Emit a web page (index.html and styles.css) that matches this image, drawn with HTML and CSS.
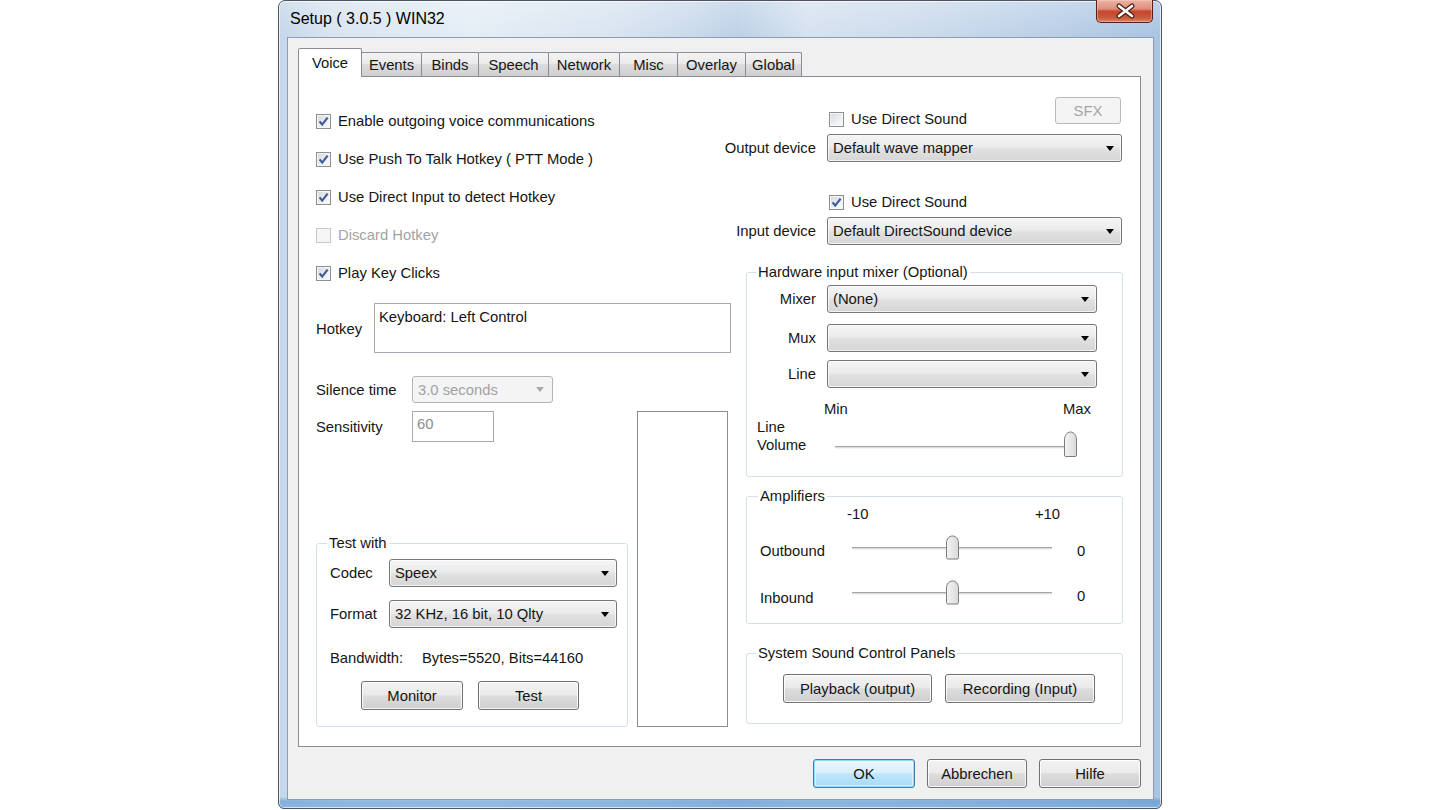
FILE: index.html
```html
<!DOCTYPE html>
<html>
<head>
<meta charset="utf-8">
<title>Setup ( 3.0.5 ) WIN32</title>
<link rel="stylesheet" href="styles.css">
</head>
<body>
<div class="window">
  <div class="titlebar">
    <span class="title">Setup ( 3.0.5 ) WIN32</span>
    <div class="close">
      <svg width="57" height="22" viewBox="0 0 57 22">
        <path d="M22 6 L35 16 M35 6 L22 16" stroke="#4b1d14" stroke-width="5" stroke-linecap="round" fill="none"/>
        <path d="M22 6 L35 16 M35 6 L22 16" stroke="#ffffff" stroke-width="2.6" stroke-linecap="round" fill="none"/>
      </svg>
    </div>
  </div>
  <div class="client">
    <div class="tabctl">
      <div class="tabstrip">
        <div class="tab sel t-voice">Voice</div>
        <div class="tab t-events">Events</div>
        <div class="tab t-binds">Binds</div>
        <div class="tab t-speech">Speech</div>
        <div class="tab t-network">Network</div>
        <div class="tab t-misc">Misc</div>
        <div class="tab t-overlay">Overlay</div>
        <div class="tab t-global">Global</div>
      </div>
      <div class="page">
        <div class="col-left">
          <div class="checks">
            <div class="cb-row"><span class="cb on"><svg width="13" height="13" viewBox="0 0 13 13"><path d="M2.6 6.4 L5.2 9.6 L10.6 2.6" fill="none" stroke="#3f5b98" stroke-width="2.2"/></svg></span>Enable outgoing voice communications</div>
            <div class="cb-row"><span class="cb on"><svg width="13" height="13" viewBox="0 0 13 13"><path d="M2.6 6.4 L5.2 9.6 L10.6 2.6" fill="none" stroke="#3f5b98" stroke-width="2.2"/></svg></span>Use Push To Talk Hotkey ( PTT Mode )</div>
            <div class="cb-row"><span class="cb on"><svg width="13" height="13" viewBox="0 0 13 13"><path d="M2.6 6.4 L5.2 9.6 L10.6 2.6" fill="none" stroke="#3f5b98" stroke-width="2.2"/></svg></span>Use Direct Input to detect Hotkey</div>
            <div class="cb-row disabled"><span class="cb off"></span>Discard Hotkey</div>
            <div class="cb-row"><span class="cb on"><svg width="13" height="13" viewBox="0 0 13 13"><path d="M2.6 6.4 L5.2 9.6 L10.6 2.6" fill="none" stroke="#3f5b98" stroke-width="2.2"/></svg></span>Play Key Clicks</div>
          </div>
          <div class="hotkey-row">
            <span class="lbl w-hotkey">Hotkey</span>
            <div class="textbox hotkey">Keyboard: Left Control</div>
          </div>
          <div class="silence-row">
            <span class="lbl w-silence">Silence time</span>
            <div class="combo disabled silence"><span>3.0 seconds</span><span class="arrow"></span></div>
          </div>
          <div class="lower">
            <div class="lower-main">
              <div class="sens-row">
                <span class="lbl w-silence">Sensitivity</span>
                <div class="textbox sens">60</div>
              </div>
              <fieldset class="group g-test">
                <legend>Test with</legend>
                <div class="gbody test-body">
                  <div class="frow"><span class="lbl w-codec">Codec</span><div class="combo codec"><span>Speex</span><span class="arrow"></span></div></div>
                  <div class="frow fmt"><span class="lbl w-codec">Format</span><div class="combo codec"><span>32 KHz, 16 bit, 10 Qlty</span><span class="arrow"></span></div></div>
                  <div class="bw"><span class="bw-lbl">Bandwidth:</span><span>Bytes=5520, Bits=44160</span></div>
                  <div class="test-btns"><div class="btn b-monitor">Monitor</div><div class="btn b-test">Test</div></div>
                </div>
              </fieldset>
            </div>
            <div class="meter"></div>
          </div>
        </div>
        <div class="col-right">
          <div class="r-top">
            <div class="cb-row ds1"><span class="cb"></span>Use Direct Sound</div>
            <div class="btn disabled sfx">SFX</div>
          </div>
          <div class="dev-row"><span class="dev-lbl">Output device</span><div class="combo dev"><span>Default wave mapper</span><span class="arrow"></span></div></div>
          <div class="cb-row ds2"><span class="cb on"><svg width="13" height="13" viewBox="0 0 13 13"><path d="M2.6 6.4 L5.2 9.6 L10.6 2.6" fill="none" stroke="#3f5b98" stroke-width="2.2"/></svg></span>Use Direct Sound</div>
          <div class="dev-row"><span class="dev-lbl">Input device</span><div class="combo dev"><span>Default DirectSound device</span><span class="arrow"></span></div></div>

          <fieldset class="group g-hw">
            <legend>Hardware input mixer (Optional)</legend>
            <div class="gbody hw-body">
              <div class="mrow"><span class="m-lbl">Mixer</span><div class="combo mx"><span>(None)</span><span class="arrow"></span></div></div>
              <div class="mrow mux"><span class="m-lbl">Mux</span><div class="combo mx"><span></span><span class="arrow"></span></div></div>
              <div class="mrow line"><span class="m-lbl">Line</span><div class="combo mx"><span></span><span class="arrow"></span></div></div>
              <div class="minmax"><span>Min</span><span>Max</span></div>
              <div class="linevol">
                <div class="lv-lbl">Line<br>Volume</div>
                <div class="slider lv">
                  <div class="track lv-track"></div>
                  <svg class="thumb lv-thumb" width="15" height="27" viewBox="0 0 15 27"><defs><linearGradient id="tg1" x1="0" y1="0" x2="1" y2="0"><stop offset="0" stop-color="#f4f4f4"/><stop offset="1" stop-color="#d9d9d9"/></linearGradient></defs><path d="M1.5 9 C1.5 4.5 4 1 7.5 1 C11 1 13.5 4.5 13.5 9 V24 Q13.5 25.5 12 25.5 H3 Q1.5 25.5 1.5 24 Z" fill="url(#tg1)" stroke="#7c7c7c"/></svg>
                </div>
              </div>
            </div>
          </fieldset>

          <fieldset class="group g-amp">
            <legend>Amplifiers</legend>
            <div class="gbody amp-body">
              <div class="scale"><span>-10</span><span>+10</span></div>
              <div class="arow">
                <span class="a-lbl">Outbound</span>
                <div class="slider amp">
                  <div class="track"></div>
                  <svg class="thumb amp-thumb" width="15" height="25" viewBox="0 0 15 25"><defs><linearGradient id="tg2" x1="0" y1="0" x2="1" y2="0"><stop offset="0" stop-color="#f4f4f4"/><stop offset="1" stop-color="#d9d9d9"/></linearGradient></defs><path d="M1.5 8 C1.5 4 4 1 7.5 1 C11 1 13.5 4 13.5 8 V22.5 Q13.5 24 12 24 H3 Q1.5 24 1.5 22.5 Z" fill="url(#tg2)" stroke="#7c7c7c"/></svg>
                </div>
                <span class="a-val">0</span>
              </div>
              <div class="arow">
                <span class="a-lbl">Inbound</span>
                <div class="slider amp">
                  <div class="track"></div>
                  <svg class="thumb amp-thumb" width="15" height="25" viewBox="0 0 15 25"><path d="M1.5 8 C1.5 4 4 1 7.5 1 C11 1 13.5 4 13.5 8 V22.5 Q13.5 24 12 24 H3 Q1.5 24 1.5 22.5 Z" fill="url(#tg2)" stroke="#7c7c7c"/></svg>
                </div>
                <span class="a-val">0</span>
              </div>
            </div>
          </fieldset>

          <fieldset class="group g-sys">
            <legend>System Sound Control Panels</legend>
            <div class="gbody sys-body">
              <div class="btn b-play">Playback (output)</div>
              <div class="btn b-rec">Recording (Input)</div>
            </div>
          </fieldset>
        </div>
      </div>
    </div>
    <div class="dlg-btns">
      <div class="btn default b-dlg">OK</div>
      <div class="btn b-dlg b-abort">Abbrechen</div>
      <div class="btn b-dlg">Hilfe</div>
    </div>
  </div>
</div>
</body>
</html>
```

FILE: styles.css
```css
* { box-sizing: border-box; }
html, body { margin: 0; padding: 0; }
body {
  width: 1440px;
  height: 810px;
  overflow: hidden;
  background: #ffffff;
  font-family: "Liberation Sans", Arial, sans-serif;
  font-size: 14.8px;
  color: #151515;
}

/* ---------- window frame ---------- */
.window {
  margin-left: 278px;
  width: 884px;
  height: 809px;
  border: 1px solid #4d5660;
  border-radius: 7px 7px 6px 6px;
  padding: 0 7px 8px 8px;
  display: flex;
  flex-direction: column;
  box-shadow: inset 0 0 0 1px rgba(255,255,255,0.65);
  background:
    linear-gradient(to bottom, rgba(255,255,255,0) 0px, rgba(255,255,255,0) 796px, rgba(70,135,200,0.5) 800px, rgba(110,170,225,0.75) 808px),
    linear-gradient(to bottom, rgba(255,255,255,0.25) 0px, rgba(255,255,255,0) 36px),
    linear-gradient(90deg, #c4d6e9 0%, #d8e4f0 6%, #e4edf6 22%, #d8e4f0 38%, #c9d9eb 47%, #bcd1e7 52%, #d5e2ef 60%, #c9d9eb 75%, #b3cbe5 92%, #a8c4e2 100%);
}
.titlebar {
  height: 36px;
  flex: none;
  display: flex;
  justify-content: space-between;
  align-items: flex-start;
}
.title {
  margin: 9px 0 0 3px;
  font-size: 16px;
  line-height: 18px;
  color: #000;
}
.close {
  width: 57px;
  height: 23px;
  margin: -1px 1px 0 0;
  border: 1px solid #5a1e14;
  border-top: none;
  border-radius: 0 0 5px 5px;
  background: linear-gradient(to bottom, #eab3a6 0%, #df8f7c 40%, #c8462c 52%, #c85a3e 80%, #d98568 100%);
  box-shadow: inset 0 0 0 1px rgba(255,210,200,0.45);
}
.close svg { display: block; }

/* ---------- client ---------- */
.client {
  flex: 1;
  background: #f0f0f0;
  border: 1px solid #8c9db1;
  padding: 10px 12px 0 10px;
  display: flex;
  flex-direction: column;
}
.tabctl { width: 843px; }
.tabstrip {
  height: 28px;
  display: flex;
  align-items: flex-end;
}
.tab {
  height: 24px;
  margin-left: -1px;
  border: 1px solid #898c95;
  border-bottom: none;
  border-radius: 2px 2px 0 0;
  background: linear-gradient(to bottom, #f3f3f3 0%, #ebebeb 45%, #dddddd 50%, #cfcfcf 100%);
  display: flex;
  align-items: center;
  justify-content: center;
  white-space: nowrap;
  line-height: 18px;
}
.tab.sel {
  height: 29px;
  margin-left: 0;
  margin-bottom: -1px;
  background: #ffffff;
  position: relative;
  z-index: 1;
}
.t-voice { width: 64px; }
.t-events { width: 61px; }
.t-binds { width: 58px; }
.t-speech { width: 71px; }
.t-network { width: 72px; }
.t-misc { width: 59px; }
.t-overlay { width: 69px; }
.t-global { width: 57px; }

.page {
  height: 671px;
  border: 1px solid #898c95;
  background: #ffffff;
  padding: 20px 17px 0 17px;
  display: flex;
  align-items: flex-start;
}

/* ---------- common controls ---------- */
.lbl { flex: none; white-space: nowrap; line-height: 18px; }
.cb-row {
  height: 20px;
  display: flex;
  align-items: center;
  gap: 7px;
  white-space: nowrap;
  line-height: 18px;
}
.cb-row.disabled { color: #a3a3a3; }
.cb {
  flex: none;
  width: 15px;
  height: 15px;
  border: 1px solid #8e8f8f;
  background: linear-gradient(135deg, #d3d6dc 0%, #eceef1 55%, #fbfbfb 100%);
  box-shadow: inset 0 0 0 1px #f6f6f6;
  display: flex;
  align-items: center;
  justify-content: center;
}
.cb svg { display: block; }
.cb.off {
  border-color: #c9c9c9;
  background: #f5f5f5;
  box-shadow: none;
}
.textbox {
  border: 1px solid #a7abb2;
  background: #ffffff;
  line-height: 18px;
}
.combo {
  display: flex;
  align-items: center;
  justify-content: space-between;
  border: 1px solid #767676;
  border-radius: 3px;
  background: linear-gradient(to bottom, #f5f5f5 0%, #ebebeb 45%, #e0e0e0 55%, #d6d6d6 100%);
  box-shadow: inset 0 0 0 1px rgba(255,255,255,0.7);
  padding: 0 7px 0 5px;
  white-space: nowrap;
  line-height: 18px;
}
.arrow {
  flex: none;
  width: 0;
  height: 0;
  border-left: 4px solid transparent;
  border-right: 4px solid transparent;
  border-top: 5px solid #000;
}
.combo.disabled {
  border-color: #b3b6b9;
  background: #f4f4f4;
  box-shadow: none;
  color: #a2a2a2;
  padding-right: 8px;
}
.combo.disabled .arrow { border-top-color: #a8a8a8; }
.btn {
  display: flex;
  align-items: center;
  justify-content: center;
  border: 1px solid #707070;
  border-radius: 3px;
  background: linear-gradient(to bottom, #f3f3f3 0%, #ebebeb 46%, #dddddd 52%, #cfcfcf 100%);
  box-shadow: inset 0 0 0 1px rgba(255,255,255,0.85);
  white-space: nowrap;
  line-height: 18px;
  height: 29px;
}
.btn.disabled {
  border-color: #b7babc;
  background: #f4f4f4;
  box-shadow: none;
  color: #a5a5a5;
}
.btn.default {
  border-color: #3c7fb1;
  background: linear-gradient(to bottom, #eaf6fd 0%, #d9f0fc 46%, #bee6fd 52%, #a7d9f5 100%);
  box-shadow: inset 0 0 0 1px #8fd8f8, inset 0 0 0 2px rgba(255,255,255,0.5);
}

.group {
  padding: 0;
  min-width: 0;
  border: 1px solid #d5dfe5;
  border-radius: 3px;
}
.group legend {
  padding: 0 2px;
  line-height: 18px;
  white-space: nowrap;
}

/* ---------- left column ---------- */
.col-left {
  width: 415px;
  flex: none;
  padding-top: 14px;
  display: flex;
  flex-direction: column;
}
.checks {
  display: flex;
  flex-direction: column;
  gap: 18px;
}
.hotkey-row {
  margin-top: 20px;
  display: flex;
  align-items: center;
}
.w-hotkey { width: 58px; padding-top: 2px; }
.hotkey {
  width: 357px;
  height: 50px;
  padding: 4px 4px;
}
.silence-row {
  margin-top: 23px;
  display: flex;
  align-items: center;
}
.w-silence { width: 96px; }
.silence { width: 141px; height: 27px; }
.lower {
  margin-top: 8px;
  height: 316px;
  display: flex;
  gap: 9px;
}
.lower-main {
  width: 312px;
  display: flex;
  flex-direction: column;
  justify-content: space-between;
}
.sens-row {
  height: 31px;
  display: flex;
  align-items: center;
}
.sens {
  width: 82px;
  height: 31px;
  padding: 3px 4px;
  color: #8c8c8c;
}
.meter {
  width: 91px;
  border: 1px solid #8d8d8d;
  background: #ffffff;
}
.g-test { margin: 0; }
.g-test legend { margin-left: 10px; }
.test-body { padding: 7px 10px 16px 13px; }
.frow { display: flex; align-items: center; }
.frow.fmt { margin-top: 13px; }
.w-codec { width: 59px; }
.codec { width: 228px; height: 28px; }
.bw {
  margin-top: 20px;
  height: 20px;
  display: flex;
  align-items: center;
  line-height: 18px;
  white-space: nowrap;
}
.bw-lbl { width: 92px; flex: none; }
.test-btns {
  margin-top: 13px;
  margin-left: 31px;
  display: flex;
  gap: 15px;
}
.b-monitor { width: 102px; }
.b-test { width: 101px; }

/* ---------- right column ---------- */
.col-right {
  width: 392px;
  flex: none;
  display: flex;
  flex-direction: column;
}
.r-top {
  height: 32px;
  display: flex;
  align-items: flex-start;
}
.ds1 { margin: 12px 0 0 98px; }
.sfx { width: 66px; height: 27px; margin-left: auto; margin-right: 2px; }
.dev-row {
  margin-top: 5px;
  display: flex;
  align-items: center;
  gap: 11px;
}
.dev-lbl {
  width: 85px;
  flex: none;
  display: flex;
  justify-content: flex-end;
  white-space: nowrap;
  line-height: 18px;
}
.dev { width: 295px; height: 28px; }
.ds2 { margin: 30px 0 0 98px; }

.g-hw { margin: 18px 0 0 15px; width: 377px; }
.g-hw legend { margin-left: 9px; }
.hw-body { padding: 4px 0 18px 0; }
.mrow { display: flex; align-items: center; gap: 11px; }
.mrow.mux { margin-top: 11px; }
.mrow.line { margin-top: 8px; }
.m-lbl {
  width: 69px;
  flex: none;
  text-align: right;
  line-height: 18px;
}
.mx { width: 270px; height: 28px; }
.minmax {
  margin: 12px 0 0 77px;
  width: 267px;
  display: flex;
  justify-content: space-between;
  line-height: 18px;
}
.linevol { display: flex; height: 40px; }
.lv-lbl { margin-left: 10px; width: 78px; flex: none; line-height: 18px; }
.slider { position: relative; flex: none; }
.slider.lv { width: 243px; height: 27px; margin-top: 13px; }
.track {
  height: 3px;
  margin-top: 12px;
  border-top: 1px solid #a6a6a6;
  border-bottom: 1px solid #f4f4f4;
  background: #dcdcdc;
}
.lv-track { width: 240px; margin-top: 15px; }
.thumb { position: absolute; top: 0; display: block; }
.lv-thumb { left: 228px; }

.g-amp { margin: 10px 0 0 15px; width: 377px; }
.g-amp legend { margin-left: 11px; }
.amp-body { padding: 0 0 18px 0; }
.scale {
  margin-left: 100px;
  width: 213px;
  display: flex;
  justify-content: space-between;
  line-height: 18px;
}
.arow { display: flex; height: 25px; margin-top: 12px; }
.arow + .arow { margin-top: 20px; }
.a-lbl { margin-left: 13px; width: 92px; flex: none; align-self: flex-end; line-height: 18px; }
.arow + .arow .a-lbl { margin-bottom: -2px; }
.slider.amp { width: 200px; height: 25px; }
.amp-thumb { left: 93px; }
.a-val { margin-left: 25px; align-self: flex-end; line-height: 18px; }

.g-sys { margin: 20px 0 0 15px; width: 377px; }
.g-sys legend { margin-left: 9px; }
.sys-body { padding: 12px 0 20px 36px; display: flex; gap: 13px; }
.b-play { width: 149px; }
.b-rec { width: 150px; }

/* ---------- dialog buttons ---------- */
.dlg-btns {
  margin-top: 12px;
  display: flex;
  justify-content: flex-end;
  gap: 12px;
}
.b-dlg { width: 102px; }
.b-abort { width: 100px; }
```
